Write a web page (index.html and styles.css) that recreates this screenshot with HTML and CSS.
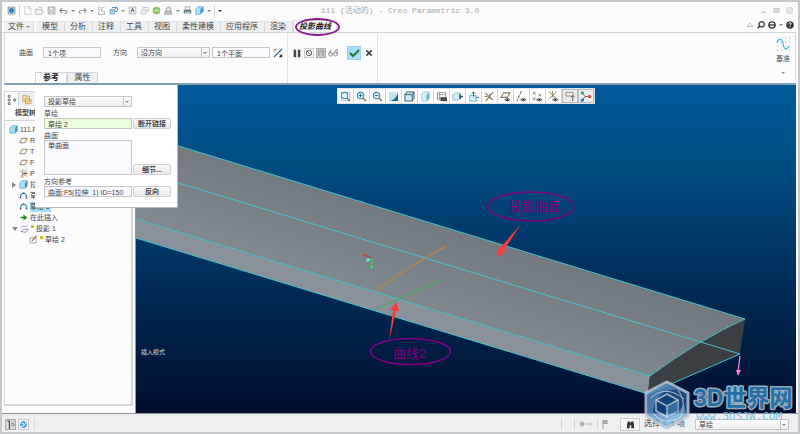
FILE: index.html
```
<!DOCTYPE html>
<html lang="zh-CN">
<head>
    <meta charset="UTF-8">
    <meta name="viewport" content="width=device-width, initial-scale=1.0">
    <title>111 (活动的) - Creo Parametric 3.0</title>
    <link rel="stylesheet" href="styles.css">
</head>
<body>
    <!-- shared icons -->
    <svg class="defs" aria-hidden="true">
        <symbol id="i-plane" viewBox="0 0 12 12"><path d="M4 3h7l-3 6H1z" fill="none" stroke="#8d7a5a" stroke-width="1.2"/></symbol>
        <symbol id="i-curve" viewBox="0 0 12 12"><path d="M2 9C2 1 10 1 10 9" fill="none" stroke="#2c86b8" stroke-width="1.4"/><path d="M1 8h2v2H1zM9 8h2v2H9zM5 2h2v2H5z" fill="#555"/></symbol>
        <symbol id="i-cube" viewBox="0 0 12 12"><path d="M1 4l3-3h7v7l-3 3H1z" fill="#a5ddf2" stroke="#5ba9cc"/><path d="M8 4v7l3-3V1z" fill="#3d94bd"/></symbol>
        <symbol id="i-csys" viewBox="0 0 12 12"><path d="M1 2l9 8M10 1L2 11M5 0v12" fill="none" stroke="#8d7a5a"/><path d="M7 5h4v2H7z" fill="#6b5b3f"/></symbol>
        <symbol id="i-eye" viewBox="0 0 12 12"><path d="M5 9.500q3-3 6 0q-3 2.500-6 0z" fill="#fff" stroke="#555"/><circle cx="8" cy="9.500" r="1" fill="#333"/></symbol>
        <symbol id="i-glass" viewBox="0 0 12 12"><circle cx="5" cy="5" r="3.500" fill="#eaf6fc" stroke="#3e8fb8" stroke-width="1.200"/><path d="M7.500 7.500l3.500 3.500" stroke="#888" stroke-width="2"/></symbol>
    </svg>

    <div class="app">
        <header class="titlebar">
            <div class="quick">
                <button class="ico" aria-label="窗口"><svg viewBox="0 0 12 12"><path d="M1.500 1.500h9v9h-9z" fill="#e6eef3" stroke="#667987"/><path d="M4 3h4l1 1v4l-1 1H4L3 8V4z" fill="#0874b5"/><path d="M5 5h2v2H5z" fill="#61c1ee"/></svg></button>
                <span class="vline"></span>
                <button class="ico" aria-label="新建"><svg viewBox="0 0 12 12"><path d="M2.500.5h5l3 3v8h-8zM7.500.5v3h3" fill="#fff" stroke="#c3c6c8"/></svg></button>
                <button class="ico" aria-label="打开"><svg viewBox="0 0 12 12"><path d="M1 11V4h3l1 1h4v2h2l-2 4zM5 2h4v2" fill="#f3f3f3" stroke="#aaa"/></svg></button>
                <button class="ico" aria-label="保存"><svg viewBox="0 0 12 12"><path d="M1.500 1.500h9v9h-9z" fill="#ddd" stroke="#999"/><path d="M3.500 1.500h5v4h-5zM3.500 8h5v2.500h-5z" fill="#fff" stroke="#aaa"/></svg></button>
                <button class="ico" aria-label="撤消"><svg viewBox="0 0 12 12"><path d="M4 3L1 6l3 3M1 6h6c5 0 4 4 1 4" fill="none" stroke="#888" stroke-width="1.500"/></svg></button>
                <i class="caret"></i>
                <button class="ico" aria-label="重做"><svg viewBox="0 0 12 12"><path d="M8 3l3 3-3 3M11 6H5C0 6 1 10 4 10" fill="none" stroke="#999" stroke-width="1.500"/></svg></button>
                <i class="caret"></i>
                <button class="ico" aria-label="重新生成"><svg viewBox="0 0 12 12"><path d="M2 1v4h3M2 7v4h8V7H6V4l4-3M4 2h2" fill="none" stroke="#aaa" stroke-width="1.200"/></svg></button>
                <button class="ico" aria-label="窗口切换"><svg viewBox="0 0 12 12"><path d="M1.500 4.500h6v6h-6z" fill="#c9e8f5" stroke="#4a86a5"/><path d="M4 2h7v5H8M9 1v3M3 7h3" fill="none" stroke="#4a86a5" stroke-width="1.200"/></svg></button>
                <i class="caret"></i>
                <button class="ico" aria-label="关闭"><svg viewBox="0 0 12 12"><path d="M1.500 1.500h9v9h-9z" fill="#eef3f7" stroke="#9aaab4"/><path d="M4 8l2-5 2 5M5 6h2" fill="none" stroke="#345"/></svg></button>
                <button class="ico" aria-label="模型"><svg viewBox="0 0 12 12"><path d="M1.500 5.500h6v5h-6zM4 5V2h7v5H8" fill="#f2f2f2" stroke="#bbb"/></svg></button>
                <button class="ico" aria-label="外观"><svg viewBox="0 0 12 12"><circle cx="6" cy="6" r="5" fill="#85bd59"/><ellipse cx="6" cy="6" rx="4" ry="2" fill="#b9de96"/></svg></button>
                <button class="ico" aria-label="保存副本"><svg viewBox="0 0 12 12"><path d="M1 8h9v3H1zM3 8V3l4-2 2 2v5" fill="#ddd" stroke="#888"/></svg></button>
                <i class="caret"></i>
                <button class="ico" aria-label="打印"><svg viewBox="0 0 12 12"><path d="M3 1h6v4H3z" fill="#fff" stroke="#888"/><path d="M1 5h10v5H1z" fill="#7b8288"/><path d="M3 8h6v3H3z" fill="#a9d7ec"/></svg></button>
                <button class="ico" aria-label="视图"><svg viewBox="0 0 12 12"><path d="M1 4l3-3h7v6l-4 4H1z" fill="#afe0f4" stroke="#5aa4c8"/><path d="M7 4v7l4-4V1z" fill="#3da4d3"/></svg></button>
                <i class="caret"></i>
                <span class="vline"></span>
                <i class="caret dark"></i>
            </div>
            <div class="title">111 (活动的) - Creo Parametric 3.0</div>
            <div class="winctl">
                <button class="ico small" aria-label="最小化"><svg viewBox="0 0 12 12"><path d="M2 8h8v2H2z" fill="#bbb"/></svg></button>
                <button class="ico small" aria-label="还原"><svg viewBox="0 0 12 12"><path d="M1.500 2.500h9v7h-9zM1 5h10M4 7h5" fill="none" stroke="#bbb" stroke-width="1.500"/></svg></button>
                <button class="ico small" aria-label="退出"><svg viewBox="0 0 12 12"><path d="M1.500 1.500h9v9h-9zM3 3l6 6M9 3L3 9" fill="none" stroke="#c5c5c5" stroke-width="1.500"/></svg></button>
            </div>
        </header>

        <nav class="menu">
            <button class="tab file">文件<i class="caret"></i></button>
            <button class="tab">模型</button>
            <button class="tab">分析</button>
            <button class="tab">注释</button>
            <button class="tab">工具</button>
            <button class="tab">视图</button>
            <button class="tab">柔性建模</button>
            <button class="tab">应用程序</button>
            <button class="tab">渲染</button>
            <button class="tab active">投影曲线<span class="ring"></span></button>
            <div class="help">
                <button class="ico small" aria-label="折叠"><svg viewBox="0 0 12 12"><path d="M1 8l5-5 5 5zM4 8h4" fill="none" stroke="#aaa"/></svg></button>
                <button class="ico small" aria-label="搜索"><svg viewBox="0 0 12 12"><circle cx="7" cy="5" r="4" fill="none" stroke="#333" stroke-width="1.800"/><path d="M4 8l-3 3" stroke="#333" stroke-width="2.200"/></svg></button>
                <button class="ico small" aria-label="连接"><svg viewBox="0 0 12 12"><circle cx="6" cy="6" r="4.600" fill="none" stroke="#333" stroke-width="2"/><path d="M1 6h10" stroke="#333" stroke-width="2"/></svg></button>
                <i class="caret"></i>
                <button class="ico small" aria-label="帮助"><svg viewBox="0 0 12 12"><circle cx="6" cy="6" r="5.600" fill="#333"/><path d="M4 5c0-3 4-3 4-1 0 1-2 1-2 3M6 8v1.500" fill="none" stroke="#fff" stroke-width="1.400"/></svg></button>
            </div>
        </nav>

        <section class="ribbon">
            <div class="dash">
                <div class="fields">
                    <label for="surf">曲面</label>
                    <input class="box" id="surf" value="1个项">
                    <label for="dir" class="second">方向</label>
                    <select class="drop" id="dir"><option>沿方向</option></select>
                    <input class="box near" id="plane" aria-label="方向平面" value="1个平面">
                    <button class="ico" aria-label="反向"><svg viewBox="0 0 12 12"><path d="M1 11L11 1" stroke="#1a6c9c" stroke-width="1.500"/><path d="M1 1l4 0-4 4z" fill="#999"/><path d="M11 11V7l-4 4z" fill="#333"/><path d="M8 8l2 2" stroke="#333"/></svg></button>
                </div>
                <div class="subtabs">
                    <button class="subtab on">参考</button>
                    <button class="subtab">属性</button>
                </div>
            </div>
            <div class="actions">
                <button class="ico" aria-label="暂停"><svg viewBox="0 0 12 12"><path d="M2 2h3v9H2zM7 2h3v9H7z" fill="#444"/></svg></button>
                <button class="ico framed" aria-label="无预览"><svg viewBox="0 0 12 12"><circle cx="6" cy="6" r="4" fill="none" stroke="#555" stroke-width="1.300"/><path d="M3 3l6 6" stroke="#555" stroke-width="1.300"/></svg></button>
                <button class="ico framed pressed" aria-label="预览"><svg viewBox="0 0 12 12"><path d="M2 11V2h3l-1 8M6 2h4v3L7 11M7 5h4M8 7l3 4" fill="none" stroke="#777"/></svg></button>
                <button class="ico" aria-label="校验"><svg viewBox="0 0 12 12"><circle cx="3" cy="7.500" r="2.200" fill="none" stroke="#777"/><circle cx="9" cy="7.500" r="2.200" fill="none" stroke="#777"/><path d="M1 7l3-5M5 7h2M8 5l2-3h1v5" fill="none" stroke="#777"/></svg></button>
                <button class="ico ok" aria-label="确定"><svg viewBox="0 0 12 12"><path d="M2 6l3 3 6-6" fill="none" stroke="#1f7d32" stroke-width="2"/></svg></button>
                <button class="ico small" aria-label="取消"><svg viewBox="0 0 12 12"><path d="M2 2l8 8M10 2l-8 8" stroke="#444" stroke-width="2.500"/></svg></button>
            </div>
            <div class="datum">
                <svg class="wave" viewBox="0 0 14 14"><path d="M1 1h13M1 5h13M1 9h13M1 13h13" stroke="#aaa" stroke-dasharray="1 3"/><path d="M1 6C2 1 6 1 7 7s4 6 6 2" fill="none" stroke="#47b3df" stroke-width="1.200"/></svg>
                <span>基准</span>
                <i class="caret"></i>
            </div>
        </section>

        <main class="work">
            <aside class="side">
                <div class="side-tabs">
                    <button class="side-tab on" aria-label="模型树"><svg viewBox="0 0 12 12"><path d="M2.500 1.500h2v2h-2zM2.500 5.500h2v2h-2zM2.500 9.500h2v2h-2zM8.500 5.500h2v2h-2z" fill="#fff" stroke="#666"/></svg></button>
                    <button class="side-tab" aria-label="文件夹"><svg viewBox="0 0 12 12"><path d="M1 1h3l1 1h4v6H1zM4 5h3l1 1h3v5H4z" fill="#f6ddb0" stroke="#c49a55"/></svg></button>
                </div>
                <div class="side-title">模型树</div>
                <ul class="tree">
                    <li class="root"><svg><use href="#i-cube"/></svg>111.P</li>
                    <li><svg><use href="#i-plane"/></svg>R</li>
                    <li><svg><use href="#i-plane"/></svg>T</li>
                    <li><svg><use href="#i-plane"/></svg>F</li>
                    <li><svg><use href="#i-csys"/></svg>P</li>
                    <li class="node"><i class="twist"></i><svg><use href="#i-cube"/></svg>拉</li>
                    <li><svg><use href="#i-curve"/></svg>草</li>
                    <li><svg><use href="#i-curve"/></svg><span class="picked">草绘 2</span></li>
                    <li><svg viewBox="0 0 12 12"><path d="M2 5h4V2l5 4-5 4V7H2z" fill="#168a28"/></svg>在此插入</li>
                    <li class="node"><i class="twist open"></i><svg viewBox="0 0 12 12"><path d="M1 10l4-3h6l-3 4zM2 5c3-6 4 2 8-3" fill="none" stroke="#9366a8"/></svg><b class="star"></b>投影 1</li>
                    <li class="leaf"><svg viewBox="0 0 12 12"><path d="M1.500 3.500h8v7h-8z" fill="#fff" stroke="#888"/><path d="M4 8l6-7" stroke="#a04545" stroke-width="1.500"/></svg><b class="star"></b>草绘 2</li>
                </ul>
            </aside>

            <div class="view">
                <svg class="scene" viewBox="136 85 660 329" preserveAspectRatio="xMinYMin slice">
                    <defs>
                        <linearGradient id="top" gradientUnits="userSpaceOnUse" x1="460" y1="220" x2="420" y2="340">
                            <stop offset="0" stop-color="#70777d"/>
                            <stop offset="1" stop-color="#858e96"/>
                        </linearGradient>
                    </defs>
                    <path d="M136 133L745 319Q700 339 650 376L136 219z" fill="url(#top)"/>
                    <path d="M136 219L650 376L648 394L136 238z" fill="#89929a"/>
                    <path d="M650 376Q700 339 745 319L740 354L648 394z" fill="#3b3f43"/>
                    <g fill="none" stroke="#45c3c9">
                        <path d="M136 133L745 319Q700 339 650 376L136 219"/>
                        <path d="M136 170L740 354L648 394L136 238"/>
                    </g>
                    <path d="M375 292Q408 266 447 246" fill="none" stroke="#c98a2e"/>
                    <path d="M373 310L442 280" stroke="#3fae55"/>
                    <path d="M364 255l8 3" stroke="#c33"/>
                    <path d="M368 259h4v8" fill="none" stroke="#35e04a"/>
                    <circle cx="364.500" cy="255" r="1.200" fill="#e33"/>
                    <circle cx="368" cy="260" r="1.700" fill="#4ff"/>
                    <circle cx="371.500" cy="267" r="1.400" fill="#35e04a"/>
                    <path d="M389 341L393 310H390L396 302L399 311H396z" fill="#ff3838"/>
                    <path d="M521 224L501 247L499 246L497 257L505 252L504 250z" fill="#ff3838"/>
                    <path d="M740 356L738 372" stroke="#ff80d8" stroke-width="1.300"/>
                    <path d="M736 370h5l-3 6z" fill="#ff80d8"/>
                    <g class="note">
                        <ellipse cx="410.500" cy="351.500" rx="40" ry="13"/>
                        <ellipse cx="531" cy="206.500" rx="43" ry="14.500"/>
                        <text x="393" y="358">曲线2</text>
                        <text x="509" y="211">投影曲面</text>
                    </g>
                    <text class="mode" x="141" y="354">插入模式</text>
                </svg>
                <div class="viewbar">
                    <button aria-label="重新调整"><svg viewBox="0 0 12 12"><path d="M1.500 1.500h9v9h-9z" fill="#fff" stroke="#abc"/><use href="#i-glass"/></svg></button>
                    <button aria-label="放大"><svg viewBox="0 0 12 12"><use href="#i-glass"/><path d="M3 5h4M5 3v4" stroke="#06a"/></svg></button>
                    <button aria-label="缩小"><svg viewBox="0 0 12 12"><use href="#i-glass"/><path d="M3 5h4" stroke="#06a"/></svg></button>
                    <button aria-label="重画"><svg viewBox="0 0 12 12"><path d="M1 1h10v10H1z" fill="#c2e2ef"/><path d="M11 1v10H1C7 10 10 6 11 1z" fill="#126b9c"/></svg></button>
                    <button aria-label="显示样式"><svg viewBox="0 0 12 12"><path d="M1 4l2-3h8v7l-2 3H1zM1 4h8v7M9 4l2-3" fill="#cdeaf6" stroke="#28536b"/></svg></button>
                    <button aria-label="已保存方向"><svg viewBox="0 0 12 12"><path d="M2 3l2-2h6v8l-2 2H2z" fill="#d9f0fa" stroke="#9cc"/><path d="M7 4v7l3-3V2z" fill="#63b7db"/></svg></button>
                    <button aria-label="视图管理器"><svg viewBox="0 0 12 12"><path d="M1.500 1.500h9v8h-9zM1 4h10M1 7h10M4 1v9" fill="#fff" stroke="#999"/><path d="M5 7h7v4H5z" fill="#444"/></svg></button>
                    <button aria-label="剖面"><svg viewBox="0 0 12 12"><path d="M1 4l3-2h4v6l-2 2H1z" fill="#d4edf8" stroke="#8bb8cc"/><path d="M9 3v6M12 6H8" stroke="#25516c" stroke-width="1.500"/></svg></button>
                    <button aria-label="透视图"><svg viewBox="0 0 12 12"><path d="M2 5h7v6H2z" fill="#dff3fb" stroke="#62b0d2"/><path d="M6 6V1M4 3l2-2 2 2M12 7H9" fill="none" stroke="#285a76"/></svg></button>
                    <button aria-label="基准显示过滤器"><svg viewBox="0 0 12 12"><path d="M1 2l9 8M10 1L2 11M6 3l1 6M1 6h3" fill="none" stroke="#8d7a5a" stroke-width="1.200"/></svg></button>
                    <button aria-label="平面显示"><svg viewBox="0 0 12 12"><path d="M4 2h7L8 7H1z" fill="none" stroke="#8d7a5a" stroke-width="1.200"/><use href="#i-eye"/></svg></button>
                    <button aria-label="轴显示"><svg viewBox="0 0 12 12"><path d="M6 0L1 11" stroke="#8d7a5a" stroke-width="1.300" stroke-dasharray="4 1"/><use href="#i-eye"/></svg></button>
                    <button aria-label="点显示"><svg viewBox="0 0 12 12"><path d="M1 1l3 3M4 1L1 4M7 3l3 3M10 3L7 6M1 7l3 3M4 7l-3 3" stroke="#8d7a5a"/><use href="#i-eye"/></svg></button>
                    <button aria-label="坐标系显示"><svg viewBox="0 0 12 12"><path d="M1 1l8 7M9 1L1 9M5 0v7" stroke="#8d7a5a"/><use href="#i-eye"/></svg></button>
                    <button class="on" aria-label="注释显示"><svg viewBox="0 0 12 12"><path d="M1.500 1.500h8v4h-8z" fill="#f8efd5" stroke="#888"/><path d="M9 5v6M7 7l2-2 2 2" fill="none" stroke="#555"/></svg></button>
                    <button class="on" aria-label="旋转中心"><svg viewBox="0 0 12 12"><path d="M2 2l3 4-3 4M5 6h5" fill="none" stroke="#666"/><circle cx="2" cy="2" r="1.700" fill="#2a9c57"/><circle cx="2" cy="10" r="1.700" fill="#1687c2"/><circle cx="10" cy="6" r="1.900" fill="#d0504a"/></svg></button>
                </div>
            </div>

            <form class="refs">
                <select class="drop" aria-label="投影类型"><option>投影草绘</option></select>
                <label for="sketch">草绘</label>
                <div class="line">
                    <input class="box green" id="sketch" value="草绘 2">
                    <button type="button" class="push">断开链接</button>
                </div>
                <label for="faces">曲面</label>
                <div class="line tall">
                    <textarea class="box" id="faces">单曲面</textarea>
                    <button type="button" class="push">细节...</button>
                </div>
                <label for="dirref">方向参考</label>
                <div class="line">
                    <input class="box" id="dirref" value="曲面:F5(拉伸_1) ID=150">
                    <button type="button" class="push">反向</button>
                </div>
            </form>
        </main>

        <footer class="status">
            <button class="ico framed pressed" aria-label="导航器"><svg viewBox="0 0 12 12"><path d="M1 1h4v10H1" fill="#ddd"/><path d="M2 1.500h3M4.500 1v11" stroke="#444" stroke-width="1.500"/><circle cx="9" cy="6" r="1.500" fill="#fff" stroke="#555"/></svg></button>
            <button class="ico framed" aria-label="浏览器"><svg viewBox="0 0 12 12"><circle cx="6" cy="6" r="4.500" fill="#37a0d3"/><path d="M1 10C4 9 9 6 11 1M3 4l3 1 1 3" fill="none" stroke="#c9eafa" stroke-width="1.500"/></svg></button>
            <span class="vline"></span>
            <div class="right">
                <span class="vline"></span>
                <span class="vline"></span>
                <svg class="dots" viewBox="0 0 14 8"><circle cx="3" cy="4" r="2.500" fill="#b5b5b5"/><circle cx="8.500" cy="4" r="1.500" fill="#ccc"/><circle cx="12" cy="4" r="1.500" fill="#ccc"/></svg>
                <span class="vline"></span>
                <svg class="flag" viewBox="0 0 8 10"><path d="M1 1v9" stroke="#999"/><path d="M1 1h6L5 3l1 2H1z" fill="#aaa"/></svg>
                <button class="find" aria-label="查找"><svg viewBox="0 0 12 12"><path d="M2 2h3l1 2 1-2h3l1 9H7V7H5v4H1z" fill="#333"/></svg></button>
                <span class="count">选择了 1 项</span>
                <select class="drop" aria-label="选择过滤器"><option>草绘</option></select>
            </div>
        </footer>

        <svg class="logo" viewBox="0 0 156 52" aria-label="3D世界网">
            <path d="M25 2L46 13V36L25 48L4 36V13z" fill="#2f6fb0" fill-opacity=".7" stroke="#b9c8d8" stroke-width="3"/>
            <path d="M6 14L25 4L36 10C22 8 12 17 11 33L6 35z" fill="#6aa5d6" fill-opacity=".7"/>
            <path d="M25 46L7 36C20 42 34 38 42 24L44 35z" fill="#8cc8ea" fill-opacity=".6"/>
            <path d="M36 10C42 18 43 28 38 38M9 18C18 9 30 9 42 19M11 33C17 42 28 43 38 38" fill="none" stroke="#cfe0ef"/>
            <path d="M25 14L36 20V31L25 37L14 31V20z" fill="#174a87" stroke="#bfd3e6" stroke-width="1.500"/>
            <path d="M25 26L36 20V31L25 37z" fill="#5b9bd0" fill-opacity=".6"/>
            <path d="M14 20L25 26L36 20M25 26V37" fill="none" stroke="#bfd3e6" stroke-width="1.500"/>
            <text class="logo-name" x="52" y="26">3D世界网</text>
            <text class="logo-url" x="54" y="40">www.3DSJW.COM</text>
        </svg>
    </div>
</body>
</html>
```
FILE: styles.css
```
* {
    box-sizing: border-box;
}
body {
    margin: 0;
    font-family: "Liberation Sans", "Noto Sans CJK SC", sans-serif;
    font-size: 7px;
    line-height: 10px;
    color: #444;
    background-color: #c3c8cc;
}
button, input, select, textarea {
    font: inherit;
    color: inherit;
    margin: 0;
    padding: 0;
    border: none;
    background: none;
    border-radius: 0;
}
.defs {
    position: absolute;
    width: 0;
    height: 0;
}
.app {
    position: relative;
    display: flex;
    flex-direction: column;
    height: 100vh;
    border: 2px solid #c3c8cc;
    background-color: #fcfcfc;
}

/* small pieces */
.ico {
    display: flex;
    width: 10px;
    height: 10px;
    flex: none;
}
.ico svg {
    width: 100%;
    height: 100%;
}
.ico.small {
    width: 8px;
    height: 8px;
}
.framed {
    border: 1px solid #ccc;
    background-color: #f4f4f4;
}
.pressed {
    border-color: #aaa;
    background-color: #d5d5d5;
}
.caret {
    border: 2px solid transparent;
    border-top-color: #888;
    border-bottom: none;
    flex: none;
}
.caret.dark {
    border-top-color: #333;
}
.vline {
    width: 1px;
    height: 12px;
    background-color: #d5d8da;
}
.box {
    height: 11px;
    padding: 0 4px;
    border: 1px solid #c2c6ca;
    background-color: #f9f8ff;
    font-size: 7px;
    line-height: 9px;
}
.green {
    background-color: #e9fddb;
}
.drop {
    appearance: none;
    height: 11px;
    padding: 0 3px;
    border: 1px solid #c2c6ca;
    background: url("data:image/svg+xml,%3Csvg xmlns='http://www.w3.org/2000/svg' width='8' height='9'%3E%3Cpath d='M.5 0v9' stroke='%23c2c6ca'/%3E%3Cpath d='M2 4h4l-2 2z' fill='%23888'/%3E%3C/svg%3E") right center no-repeat, linear-gradient(#fcfcfc, #eeeeee);
}

/* title bar */
.titlebar {
    display: flex;
    align-items: center;
    height: 17px;
    padding: 0 5px;
}
.quick {
    display: flex;
    flex: 1;
    align-items: center;
    gap: 3px;
}
.quick .ico {
    width: 9px;
    height: 9px;
}
.title {
    font-family: "Liberation Mono", "Noto Sans CJK SC", monospace;
    font-size: 8px;
    color: #aaa;
}
.winctl {
    display: flex;
    flex: 1;
    justify-content: flex-end;
    gap: 6px;
}
.winctl .small {
    width: 7px;
    height: 7px;
}

/* menu */
.menu {
    display: flex;
    align-items: flex-end;
    height: 14px;
    padding: 0 2px;
    border-bottom: 1px solid #d3d6d8;
    margin-right: 2px;
}
.tab {
    height: 11px;
    padding: 0 6px 0 5px;
    border-right: 1px solid #d9dcde;
    border-top: 1px solid #e2e4e6;
    background-color: #eeeff1;
    font-size: 8px;
    line-height: 10px;
}
.file {
    display: flex;
    align-items: center;
    gap: 2px;
    padding: 0 3px 0 4px;
    margin-right: 3px;
}
.active {
    position: relative;
    height: 12px;
    padding: 0 5px;
    border-left: 1px solid #d3d6d8;
    background-color: #fcfcfc;
    font-weight: bold;
    font-style: italic;
    color: #222;
}
.ring {
    position: absolute;
    inset: -3px -4px -4px 1px;
    border: 2px solid #861a88;
    border-radius: 50%;
}
.help {
    display: flex;
    align-items: center;
    gap: 3px;
    height: 14px;
    margin-left: auto;
}

/* ribbon */
.ribbon {
    display: flex;
    height: 52px;
    margin: 0 2px;
    border: 1px solid #d3d6d8;
    border-top: none;
    border-bottom: 2px solid #7f9fb3;
}
.dash {
    display: flex;
    flex-direction: column;
    width: 283px;
    border-right: 1px solid #e0e2e4;
}
.fields {
    display: flex;
    flex: 1;
    align-items: center;
    padding-left: 14px;
}
.fields .box {
    width: 58px;
    margin-left: 10px;
}
.fields .second {
    margin-left: 12px;
}
.fields .drop {
    width: 73px;
    margin-left: 10px;
}
.fields .near {
    margin: 0 3px 0 2px;
}
.subtabs {
    display: flex;
    padding-left: 30px;
}
.subtab {
    width: 31px;
    height: 11px;
    border: 1px solid #d3d6d8;
    border-bottom: none;
    background-color: #eeeff1;
    font-size: 8px;
    line-height: 10px;
}
.subtab.on {
    width: 32px;
    background-color: #fff;
    font-weight: bold;
    color: #222;
}
.actions {
    display: flex;
    align-items: center;
    gap: 2px;
    width: 90px;
    height: 50px;
    padding: 0 4px 10px;
    border-right: 1px solid #e0e2e4;
}
.actions .ok {
    width: 14px;
    height: 14px;
    margin: 0 2px 0 7px;
    border: 1px solid #9bd0ec;
    background-color: #a5dcfa;
}
.datum {
    display: flex;
    flex-direction: column;
    align-items: center;
    gap: 3px;
    margin-left: auto;
    padding: 4px 5px 0;
    font-size: 7px;
}
.wave {
    width: 14px;
    height: 14px;
}
.datum .caret {
    margin-top: 5px;
}

/* work area */
.work {
    position: relative;
    display: flex;
    flex: 1;
    min-height: 0;
    padding: 0 2px 0 0;
    border-bottom: 1px solid #8b9299;
}
.side {
    display: flex;
    flex-direction: column;
    width: 134px;
    padding: 6px 2px 7px;
    border-right: 1px solid #8b9299;
}
.side-tabs {
    display: flex;
    border: 1px solid #d3d6d8;
    border-bottom: none;
}
.side-tab {
    width: 17px;
    height: 14px;
    padding: 1px 3px;
    border-right: 1px solid #d3d6d8;
    background-color: #eeeff1;
}
.side-tab.on {
    width: 14px;
    padding: 1px;
    background-color: #fcfcfc;
}
.side-tab svg {
    display: block;
    width: 100%;
    height: 11px;
}
.side-title {
    height: 15px;
    padding: 2px 10px;
    border: 1px solid #d3d6d8;
    border-top: none;
    font-size: 7px;
    font-weight: bold;
}
.tree {
    flex: 1;
    margin: 0;
    padding: 3px 0 0;
    list-style: none;
    border: 1px solid #d3d6d8;
    border-top: none;
    border-right-width: 2px;
    border-bottom-width: 2px;
}
.tree li {
    display: flex;
    align-items: center;
    gap: 2px;
    height: 11px;
    padding-left: 14px;
    white-space: nowrap;
}
.tree .root {
    padding-left: 4px;
}
.tree .node {
    padding-left: 7px;
}
.tree .leaf {
    padding-left: 24px;
}
.tree svg {
    width: 9px;
    height: 9px;
    flex: none;
}
.twist {
    width: 5px;
    border: 3px solid transparent;
    border-left: 4px solid #888;
    border-right: none;
}
.twist.open {
    border: 3px solid transparent;
    border-top: 4px solid #888;
    border-bottom: none;
}
.star {
    width: 3px;
    height: 3px;
    margin-bottom: 4px;
    background-color: #c8c81c;
}
.picked {
    padding-right: 1px;
    background-color: #a9dcfa;
}

/* graphics view */
.view {
    position: relative;
    display: flex;
    flex: 1;
    justify-content: center;
    align-items: flex-start;
    min-width: 0;
    padding-top: 3px;
    background: linear-gradient(#005a9a, #004a80 28%, #002b56 62%, #000e2e);
}
.scene {
    position: absolute;
    inset: 0;
    width: 100%;
    height: 100%;
}
.note ellipse {
    fill: none;
    stroke: #800080;
    stroke-width: 1.5px;
}
.note text {
    font-size: 13px;
    fill: #800080;
}
.mode {
    font-size: 6px;
    fill: #ddd;
}
.viewbar {
    position: relative;
    display: flex;
    height: 16px;
    border: 1px solid #dde3e8;
    background-color: #f4f4f4;
}
.viewbar button {
    width: 16px;
    padding: 1px 2px;
    border-right: 1px solid #d5d8da;
    background-color: #fff;
}
.viewbar .on {
    border: 1px solid #bbb;
    background-color: #eaecee;
    padding: 0 1px;
}
.viewbar svg {
    display: block;
    width: 100%;
    height: 11px;
}

/* references panel, hangs from the ribbon */
.refs {
    position: absolute;
    top: 0;
    left: 33px;
    width: 143px;
    padding: 11px 6px 10px 9px;
    border-right: 1px solid #b5bac0;
    border-bottom: 1px solid #b5bac0;
    background-color: #fff;
}
.refs .drop {
    display: block;
    width: 88px;
    margin-bottom: 3px;
}
.refs label {
    display: block;
    height: 8px;
    line-height: 8px;
}
.line {
    display: flex;
    align-items: center;
    gap: 1px;
    margin-bottom: 3px;
}
.refs .line:last-child {
    margin-bottom: 0;
}
.line .box {
    width: 88px;
    flex: none;
    padding: 0 3px;
}
.line.tall {
    align-items: flex-end;
}
.line textarea.box {
    height: 35px;
    resize: none;
    overflow: hidden;
}
.push {
    flex: 1;
    height: 11px;
    border: 1px solid #cfcfcf;
    border-radius: 2px;
    background: linear-gradient(#fafafa, #e9e9e9);
    font-weight: bold;
    line-height: 9px;
    white-space: nowrap;
}

/* status bar */
.status {
    display: flex;
    align-items: center;
    gap: 2px;
    height: 18px;
    padding: 2px 9px 0 3px;
    background-color: #eeeff1;
}
.status .ico {
    width: 11px;
    height: 11px;
}
.status > .vline {
    margin: 0 3px;
}
.right {
    display: flex;
    align-items: center;
    gap: 4px;
    margin-left: auto;
}
.right .vline:first-child {
    margin-right: 8px;
}
.right .drop {
    width: 94px;
    margin-left: 6px;
}
.count {
    font-size: 8px;
}
.dots {
    width: 14px;
    height: 8px;
}
.flag {
    width: 8px;
    height: 10px;
}
.find {
    display: flex;
    justify-content: center;
    align-items: center;
    width: 20px;
    height: 13px;
    margin-left: 6px;
    border: 1px solid #ccc;
    background-color: #f7f7f7;
}
.find svg {
    width: 9px;
    height: 9px;
}

/* site logo over the lower right corner */
.logo {
    position: absolute;
    right: 0;
    bottom: 0;
    width: 156px;
    height: 52px;
    opacity: 0.85;
    pointer-events: none;
}
.logo-name {
    font-size: 23px;
    font-weight: bold;
    fill: #2b7fb8;
    stroke: #b4c6d6;
    stroke-width: 3px;
    paint-order: stroke;
    stroke-linejoin: round;
}
.logo-url {
    font-family: "DejaVu Sans Mono", monospace;
    font-size: 11px;
    fill: #6db9e3;
}
```
